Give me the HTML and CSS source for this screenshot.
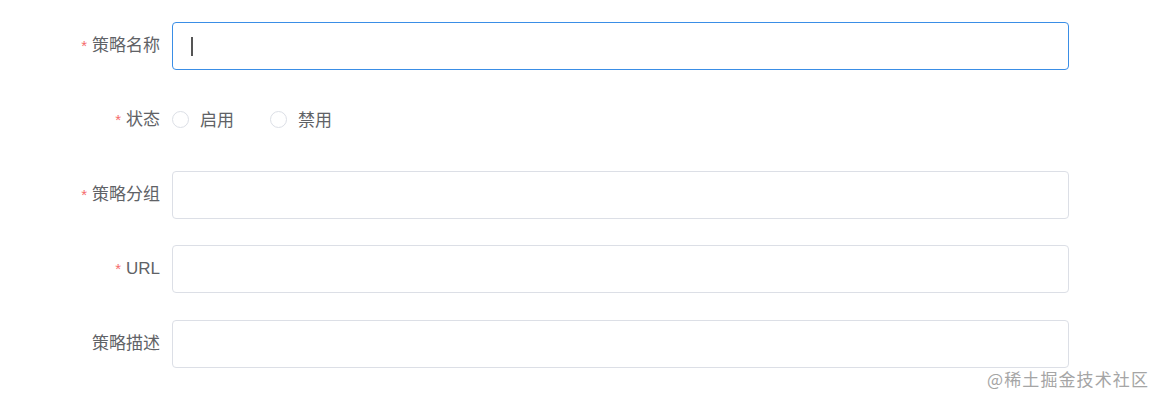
FILE: index.html
```html
<!DOCTYPE html>
<html lang="zh">
<head>
<meta charset="utf-8">
<link rel="stylesheet" href="styles.css">
</head>
<body>
<form class="form">
  <div class="item">
    <label class="label required">策略名称</label>
    <div class="content">
      <div class="input focused"><span class="caret"></span></div>
    </div>
  </div>
  <div class="item">
    <label class="label required">状态</label>
    <div class="content radios">
      <span class="radio"><span class="dot"></span><span class="rtext">启用</span></span>
      <span class="radio"><span class="dot"></span><span class="rtext">禁用</span></span>
    </div>
  </div>
  <div class="item">
    <label class="label required">策略分组</label>
    <div class="content"><div class="input"></div></div>
  </div>
  <div class="item">
    <label class="label required">URL</label>
    <div class="content"><div class="input"></div></div>
  </div>
  <div class="item">
    <label class="label">策略描述</label>
    <div class="content"><div class="input"></div></div>
  </div>
</form>
<div class="watermark">@稀土掘金技术社区</div>
</body>
</html>
```
FILE: styles.css
```css
html, body {
  margin: 0;
  padding: 0;
  background: #fff;
}
body {
  width: 1163px;
  height: 403px;
  overflow: hidden;
  position: relative;
  font-family: "Liberation Sans", "Noto Sans CJK SC", sans-serif;
  color: #606266;
}
.form {
  padding-top: 22px;
  display: flex;
  flex-direction: column;
  gap: 26px;
}
.item {
  display: flex;
  align-items: center;
  height: 48px;
}
.item:nth-child(3) { margin-top: 1px; }
.item:nth-child(5) { margin-top: 1px; }
.label {
  width: 160px;
  padding-right: 12px;
  text-align: right;
  font-size: 17px;
  color: #606266;
  line-height: 48px;
}
.required::before {
  content: "*";
  color: #f56c6c;
  margin-right: 5px;
  font-size: 15px;
}
.content {
  width: 897px;
  height: 48px;
}
.input {
  box-sizing: border-box;
  height: 48px;
  border: 1px solid #dcdfe6;
  border-radius: 4px;
  display: flex;
  align-items: center;
  padding-left: 18px;
}
.input.focused {
  border-color: #3a8ee6;
}
.caret {
  width: 2px;
  height: 19px;
  background: #555;
}
.radios {
  box-sizing: border-box;
  display: flex;
  align-items: center;
  gap: 36px;
  padding-bottom: 3px;
}
.radio {
  display: inline-flex;
  align-items: center;
}
.dot {
  box-sizing: border-box;
  width: 17px;
  height: 17px;
  border: 1px solid #dcdfe6;
  border-radius: 50%;
  background: #fff;
  margin-top: 2px;
}
.rtext {
  margin-left: 11px;
  font-size: 17px;
  color: #606266;
}
.watermark {
  position: absolute;
  left: 987px;
  top: 366px;
  font-size: 17px;
  color: #a5a5a5;
  font-family: "Noto Sans CJK SC", sans-serif;
  letter-spacing: 1.1px;
}
```
